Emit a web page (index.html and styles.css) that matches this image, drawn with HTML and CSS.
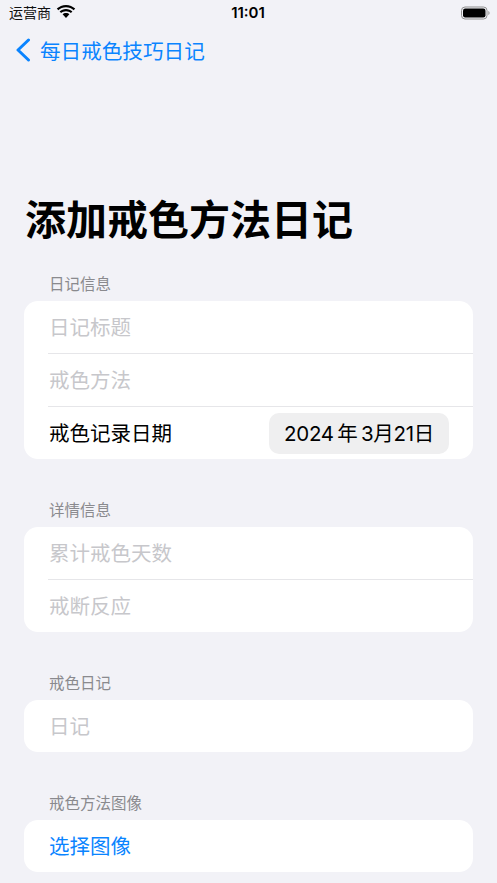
FILE: index.html
```html
<!DOCTYPE html>
<html lang="zh-CN">
<head>
<meta charset="utf-8">
<title>添加戒色方法日记</title>
<link rel="stylesheet" href="styles.css">
</head>
<body>
<div class="page">
  <header class="status">
    <div class="status-left">
      <span class="carrier">运营商</span>
      <svg class="wifi" width="20" height="15" viewBox="0 0 20 15"><path d="M10 3.200c3 0 5.700 1.100 7.700 3l1.500-1.600C16.800 2.300 13.600.9 10 .9S3.200 2.300.8 4.600l1.500 1.600c2-1.900 4.700-3 7.700-3z"/><path d="M10 7.200c1.900 0 3.600.7 4.900 1.900l1.500-1.600C14.700 5.900 12.500 5 10 5S5.300 5.900 3.600 7.500l1.500 1.600C6.400 7.900 8.100 7.200 10 7.200z"/><path d="M10 9c-1.400 0-2.600.5-3.400 1.300l3.400 3.700 3.400-3.700C12.600 9.500 11.400 9 10 9z"/></svg>
    </div>
    <div class="time">11:01</div>
    <div class="status-right">
      <svg width="29" height="14" viewBox="0 0 29 14"><rect x=".5" y="1" width="25.500" height="12" rx="3.500" fill="none" stroke="#8e8e8e"/><rect x="2" y="2.500" width="22.500" height="9" rx="2.200" fill="#000"/><path d="M27.300 5v4c.8-.3 1.300-1.100 1.300-2s-.5-1.700-1.300-2z" fill="#9a9a9a"/></svg>
    </div>
  </header>
  <nav class="nav">
    <svg class="chev" width="16" height="24" viewBox="0 0 16 24"><path d="M13.500 2L3 12l10.500 10" fill="none" stroke="#0a84ff" stroke-width="3" stroke-linecap="round" stroke-linejoin="round"/></svg>
    <span class="back">每日戒色技巧日记</span>
  </nav>
  <h1 class="title">添加戒色方法日记</h1>

  <section class="section first">
    <h2 class="label">日记信息</h2>
    <div class="card">
      <div class="row ph">日记标题</div>
      <div class="row ph">戒色方法</div>
      <div class="row date-row">
        <span class="text">戒色记录日期</span>
        <span class="date">2024 年 3月21日</span>
      </div>
    </div>
  </section>

  <section class="section">
    <h2 class="label">详情信息</h2>
    <div class="card">
      <div class="row ph">累计戒色天数</div>
      <div class="row ph">戒断反应</div>
    </div>
  </section>

  <section class="section">
    <h2 class="label">戒色日记</h2>
    <div class="card">
      <div class="row ph">日记</div>
    </div>
  </section>

  <section class="section">
    <h2 class="label">戒色方法图像</h2>
    <div class="card">
      <div class="row link">选择图像</div>
    </div>
  </section>
</div>
</body>
</html>
```
FILE: styles.css
```css
* { box-sizing: border-box; margin: 0; padding: 0; }
html, body { width: 497px; height: 883px; overflow: hidden; }
body {
  background: #f2f2f7;
  color: #000;
  font-family: "Noto Sans CJK SC", "Inter", "Liberation Sans", sans-serif;
}
.page { display: flex; flex-direction: column; height: 883px; }

.status {
  display: grid;
  grid-template-columns: 1fr auto 1fr;
  align-items: center;
  height: 26px;
  padding: 0 7px 0 9px;
}
.status-left { display: flex; align-items: center; gap: 5px; }
.carrier { font-size: 14px; line-height: 24px; margin-top: -2px; color: #111; }
.wifi { display: block; margin-top: -3px; }
.time {
  font-family: "Inter", "Liberation Sans", sans-serif;
  font-size: 15px;
  font-weight: 600;
  line-height: 26px;
  margin-right: 3px;
}
.status-right { display: flex; justify-content: flex-end; }

.nav {
  display: flex;
  align-items: center;
  gap: 9px;
  height: 48px;
  padding-left: 15px;
}
.chev { display: block; }
.back { font-size: 20.600px; line-height: 46px; color: #0a84ff; }

.title {
  margin-top: 112px;
  padding-left: 25px;
  height: 62px;
  font-size: 41px;
  line-height: 62px;
  font-weight: 600;
}

.section { padding: 0 24px; margin-top: 37px; }
.section.first { margin-top: 22px; }
.label {
  padding-left: 25px;
  height: 31px;
  font-size: 15.500px;
  line-height: 26px;
  font-weight: 400;
  color: #8a8a8e;
}
.card { background: #fff; border-radius: 14px; overflow: hidden; }
.row {
  display: flex;
  align-items: center;
  height: 53px;
  margin-left: 24px;
  padding-left: 1px;
  padding-bottom: 2px;
  font-size: 20.500px;
  border-bottom: 1px solid #e6e6e9;
}
.row:last-child { height: 52px; border-bottom: 0; }
.ph { color: #c7c7cb; }
.link { color: #0a84ff; }
.date-row { justify-content: space-between; padding-right: 24px; padding-bottom: 0; }
.text { margin-top: -2px; }
.date {
  display: flex;
  align-items: center;
  justify-content: center;
  width: 180px;
  height: 41px;
  padding-bottom: 2px;
  border-radius: 10px;
  background: #efeff0;
  font-family: "Inter", "Noto Sans CJK SC", sans-serif;
  font-size: 20.500px;
  letter-spacing: -0.300px;
  word-spacing: -2px;
}
```
